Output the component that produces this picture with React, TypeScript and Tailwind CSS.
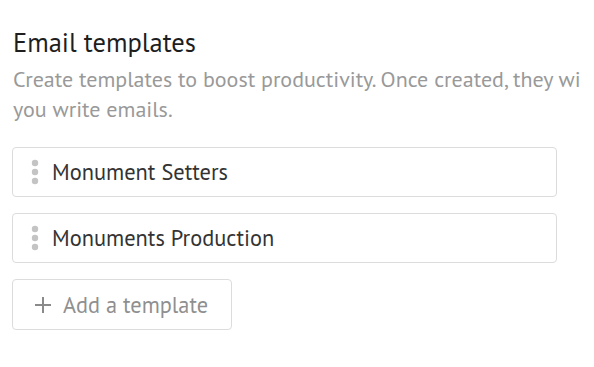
import React from "react";

function Dots() {
  return (
    <svg width="8" height="26" viewBox="0 0 8 26" className="shrink-0">
      <circle cx="4" cy="4" r="3.2" fill="#c4c4c4" />
      <circle cx="4" cy="13" r="3.2" fill="#c4c4c4" />
      <circle cx="4" cy="22" r="3.2" fill="#c4c4c4" />
    </svg>
  );
}

function Row({ label }: { label: string }) {
  return (
    <div className="flex items-center h-[50px] w-[545px] border border-[#dcdcdc] rounded-[4px] bg-white pl-[18px]">
      <Dots />
      <span className="ml-[13px] text-[22.4px] text-[#333]">{label}</span>
    </div>
  );
}

export default function App() {
  return (
    <div
      className="w-[594px] h-[367px] overflow-hidden bg-white pl-[12px] pt-[26px]"
      style={{ fontFamily: '"PT Sans", "Open Sans", "Noto Sans", sans-serif' }}
    >
      <h1 className="text-[26.5px] leading-[32px] text-[#1e1e1e] ml-[1px]">Email templates</h1>
      <div className="mt-[6px] ml-[1px] w-[569px] overflow-hidden">
        <p className="text-[22px] leading-[30px] text-[#999] whitespace-nowrap">
          Create templates to boost productivity. Once created, they will appear when
          <br />
          you write emails.
        </p>
      </div>
      <div className="mt-[23px] flex flex-col gap-[16px]">
        <Row label="Monument Setters" />
        <Row label="Monuments Production" />
      </div>
      <button className="mt-[16px] flex items-center h-[51px] w-[220px] border border-[#dcdcdc] rounded-[4px] bg-white pl-[21px]">
        <svg width="18" height="18" viewBox="0 0 18 18">
          <path d="M9 1v16M1 9h16" stroke="#8a8a8a" strokeWidth="2" />
        </svg>
        <span className="ml-[11px] text-[22.3px] text-[#8f8f8f]">Add a template</span>
      </button>
    </div>
  );
}
